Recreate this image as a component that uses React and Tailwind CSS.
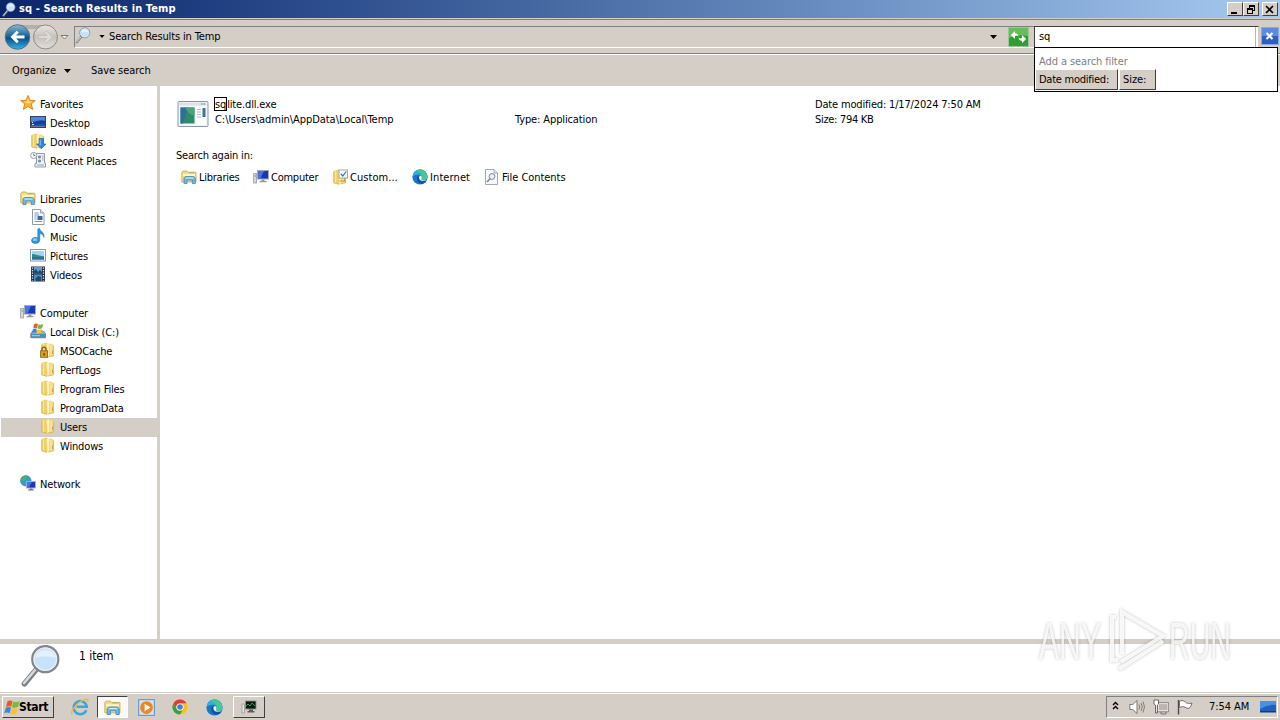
import React from "react";

const Svg = ({ size = 16, className = "", children }) => (
  <svg width={size} height={size} viewBox="0 0 16 16" className={`shrink-0 ${className}`}>
    {children}
  </svg>
);

const StarIcon = () => (
  <Svg>
    <path d="M8 .5l2 4.800 5.300.3-4.100 3.400 1.500 5.400L8 11.500l-4.700 2.900 1.500-5.400L.7 5.600 6 5.300z" fill="#fbb52c" stroke="#e07a14" strokeWidth=".9" />
    <path d="M8 3l1.200 3.400 3.300.3L8 8.500 3.700 6.700l3.100-.3z" fill="#fee79a" />
  </Svg>
);

const DesktopIcon = () => (
  <Svg>
    <rect x=".5" y="2.500" width="15" height="11" fill="#2050b8" stroke="#3a4458" />
    <path d="M1 3h14v4C10 5 6 8 1 8z" fill="#4c86de" />
    <path d="M1 9c5-1 9-3 14-2v3c-5-1-9 1-14 1z" fill="#173f9d" />
    <path d="M1 12h14v1H1z" fill="#6c7c96" />
    <path d="M2 10.500h2M2 8.500h1" stroke="#cfe2ff" />
  </Svg>
);

const FolderIcon = ({ children }) => (
  <Svg>
    <path d="M1.500 2l5-1.500L8 2v13l-1.500.5-5-1.500z" fill="#efcf68" />
    <path d="M8 2l3-.5L13.800 3v11L8 15z" fill="#f3d97f" />
    <path d="M6.500 2.500L9 1v13.500l-1.500 1z" fill="#fdf2bb" />
    <path d="M3.500 2v12" stroke="#f9e798" strokeWidth="1.400" />
    <path d="M11 3v10.500" stroke="#f9e798" strokeWidth="1.400" />
    <path d="M1.800 2.500v11.300l5 1.500M13.600 3.500v10.300L8 15" fill="none" stroke="#d5ad48" strokeWidth=".7" />
    <path d="M12.500 8.500v3.500" stroke="#c99d3a" strokeWidth=".9" />
    {children}
  </Svg>
);

const DownloadsIcon = () => (
  <FolderIcon>
    <path d="M9 5.500h4.500V11H16l-4.700 4.800L6.500 11H9z" fill="#2f86d6" stroke="#1b5ca8" strokeWidth=".6" />
    <path d="M10.200 6.500v6" stroke="#8cc8f5" />
  </FolderIcon>
);

const LockedFolderIcon = () => (
  <FolderIcon>
    <path d="M2 9V7.200a2 2 0 0 1 4 0V9" fill="none" stroke="#8b6508" strokeWidth="1.400" />
    <rect x=".6" y="8.800" width="7" height="6.500" fill="#d99e1b" stroke="#8a6108" strokeWidth=".8" />
    <rect x="3.500" y="11" width="1.200" height="2.500" fill="#4a3300" />
  </FolderIcon>
);

const RecentIcon = () => (
  <Svg>
    <path d="M5 1.500h9.500V11h1v4H5v-3.500h1.500V4H5z" fill="#eef2f6" stroke="#8794a2" strokeWidth=".9" />
    <path d="M8.500 4h2v2h-2zM8.500 8h2v2h-2zM12 4h1.500M12 6h1.500M12 8h1.500M7 13h7" fill="#6da0cf" stroke="#6c8298" strokeWidth=".7" />
    <circle cx="3.700" cy="3.500" r="3.100" fill="#f7f9fb" stroke="#8d98a5" strokeWidth=".9" />
    <path d="M3.700 1.500v2h1.600" fill="none" stroke="#576574" strokeWidth=".8" />
  </Svg>
);

const LibrariesIcon = ({ size }) => (
  <Svg size={size}>
    <path d="M.8 13V3.200L2 2h4l1.200 1.200H15V13z" fill="#f3dc83" stroke="#c7a548" strokeWidth=".8" />
    <path d="M2 5h12v2H2z" fill="#fdf5cb" />
    <path d="M8 3.800h5" stroke="#7fbf6a" strokeWidth=".8" />
    <path d="M3 14.600V9.200L4.500 7.500h8L14.300 9.200v5.400h-3V11H6v3.600z" fill="#70b8e0" stroke="#3e88ba" strokeWidth=".8" />
    <path d="M4.500 9h8" stroke="#c9ebfa" strokeWidth="1.200" />
  </Svg>
);

const DocumentsIcon = () => (
  <Svg>
    <path d="M2.500.5h8l3.500 3.500v11.500H2.500z" fill="#fff" stroke="#7e91a8" strokeWidth=".9" />
    <path d="M10.500.5V4H14" fill="#d7e3f0" stroke="#7e91a8" strokeWidth=".8" />
    <path d="M4.500 4h4M4.500 6h4.500M4.500 8h2M4.500 10h2M4.500 12.500h7.500" stroke="#5c86bd" strokeWidth=".9" />
    <rect x="7.500" y="7" width="5" height="4" fill="#3668a5" />
  </Svg>
);

const MusicIcon = () => (
  <Svg>
    <path d="M7.800 1L9.500.3c.4 3 5.200 3.600 4.500 9.200-.6-2.600-2-3.600-4.200-4v6.400c0 2.200-1.800 3.600-4.300 3.600S1.500 14.200 1.500 12.500s1.700-3.200 4.200-3.200c.8 0 1.500.2 2.100.5z" fill="#2e94dc" stroke="#1a6cb0" strokeWidth=".5" />
    <ellipse cx="5" cy="11.700" rx="2.300" ry="1.400" fill="#86cdf7" />
  </Svg>
);

const PicturesIcon = () => (
  <Svg>
    <rect x=".5" y="2.500" width="15" height="11.500" fill="#fff" stroke="#8698aa" />
    <rect x="2" y="4" width="12" height="8.500" fill="#9ed6f5" />
    <path d="M2 7c4 0 6 2 12 2v3.500H2z" fill="#3b8a80" />
    <path d="M2 10c4 0 7-.5 12 .5v2H2z" fill="#2470b5" />
  </Svg>
);

const VideosIcon = () => (
  <Svg>
    <rect x="1" y=".5" width="14" height="15" fill="#26303b" />
    <rect x="4" y="1" width="8" height="6.500" fill="#5b9fd0" />
    <rect x="4" y="8.500" width="8" height="6.500" fill="#4a90c8" />
    <path d="M4 5l2-2 2 3 2-2 2 2v1.500H4zM5 13l3-3 3 1v4H6z" fill="#1d4b77" />
    <path d="M2.500 1.500v13M13.500 1.500v13" stroke="#e8edf2" strokeWidth="1.300" strokeDasharray="1.300 1.200" />
  </Svg>
);

const ComputerIcon = () => (
  <Svg>
    <rect x="4.500" y="1.500" width="11" height="8.500" fill="#1a37b4" stroke="#a3acb8" />
    <path d="M5 2h6L7.500 9.500H5z" fill="#4a71e0" />
    <path d="M8.500 10.500h3v1.500h2v1.300H6.500V12h2z" fill="#8b97a5" />
    <rect x=".7" y="4.500" width="2.800" height="9.500" fill="#d6dbe0" stroke="#858e99" strokeWidth=".7" />
    <path d="M1.500 7h1.500" stroke="#3fa34d" />
  </Svg>
);

const WindowsFlag = ({ x = 0, y = 0, s = 1 }) => (
  <g transform={`translate(${x} ${y}) scale(${s})`}>
    <path d="M2.800 1.500Q5 0 7.800 1.300L6.500 7Q3.800 5.700 1.300 7.200z" fill="#ea5a24" />
    <path d="M8.500 1.600q2.700 1.600 6.500-.3L13.400 7Q10.200 8.900 7.200 7.400z" fill="#7cba3a" />
    <path d="M1.100 8Q3.800 6.600 6.300 7.900L5 13.500Q2.300 12.100-.5 13.600z" fill="#3b86d8" />
    <path d="M7 8.300q2.900 1.500 6.200-.2l-1.500 5.500q-3 1.800-6 .3z" fill="#fbc02a" />
  </g>
);

const DiskIcon = () => (
  <Svg>
    <path d="M.8 10.500L2.800 8h10.500l2.200 2.500v4.300H.8z" fill="#9fb2c0" stroke="#54758f" strokeWidth=".7" />
    <path d="M.8 10.800h14.700v4H.8z" fill="#4d8eb2" />
    <path d="M2 12.700h8" stroke="#a7dbef" strokeWidth=".9" />
    <WindowsFlag x={2.2} y={0} s={0.74} />
  </Svg>
);

const NetworkIcon = () => (
  <Svg>
    <circle cx="5.800" cy="5.800" r="5.300" fill="#2f9bd9" stroke="#1a6ba8" strokeWidth=".5" />
    <path d="M2 3c2-2 4-2.300 5-2l-1 3-3 2-2 0zM5 7l3 1-1 3H5.500zM8.500 2.500L10.700 5 9 6z" fill="#4cb848" />
    <rect x="6.500" y="6.500" width="9" height="6.500" fill="#1a37b4" stroke="#a8b3c2" strokeWidth=".9" />
    <path d="M7 7h5l-3 5.500H7z" fill="#4a71e0" />
    <path d="M9.500 13.500h3v1h1.500v1H8v-1h1.500z" fill="#6c7887" />
  </Svg>
);

const CustomIcon = () => (
  <FolderIcon>
    <rect x="7" y="1" width="8.500" height="8" fill="#fff" stroke="#8493a5" strokeWidth=".8" />
    <path d="M8.800 4.800l2 2.200 3.500-4.500" fill="none" stroke="#2b68c4" strokeWidth="1.200" />
    <path d="M7.500 12h6" stroke="#b98c2c" />
  </FolderIcon>
);

const EdgeIcon = ({ size = 16 }) => (
  <Svg size={size}>
    <circle cx="8" cy="8" r="7.600" fill="#1876cc" />
    <path d="M.5 8A7.500 7.500 0 0 1 15.500 7.500C15.500 10 14 11.200 12 11.200c-2.500 0-3-1-2.500-1.700.8-1 .5-4-2.500-4C4 5.500 1 6.500.5 8z" fill="#2fb0d8" />
    <path d="M8 .5a7.500 7.500 0 0 1 7.500 7c0 2.500-1.500 3.700-3.500 3.700-2.500 0-3-1-2.500-1.700C11 7 9.500 3 4 2z" fill="#56cf78" opacity=".7" />
    <path d="M5.200 8c-1 4 2 7.300 6 6.600 1.700-.5 2.700-1.600 3.400-2.800C10.500 13.500 7 12 7.200 8.800 7 7 5.500 7 5.200 8z" fill="#124f9c" />
    <path d="M9.300 9.800c.9-1 .5-2.700-.6-3.300-1.500.3-2 1.800-1.500 3.300.4 1.300 2.300 2.300 4.600 2 1.300-.1 2.200-.4 2.900-.9-2.100.9-5.600.4-5.400-1.100z" fill="#fff" />
  </Svg>
);

const FileContentsIcon = () => (
  <Svg>
    <path d="M1.500.5h8.500L13.500 4v11.500h-12z" fill="#fafbfc" stroke="#969ea8" strokeWidth=".9" />
    <path d="M10 .5V4h3.500" fill="#e4e8ec" stroke="#969ea8" strokeWidth=".8" />
    <circle cx="8" cy="7.500" r="2.900" fill="#edf3f8" stroke="#7d8792" strokeWidth="1" />
    <path d="M6 9.800L3 13" stroke="#7d8792" strokeWidth="1.500" />
  </Svg>
);

const Magnifier = ({ size, className, rim = "#81868c" }) => (
  <Svg size={size} className={className}>
    <path d="M1.600 14.500L6 9.200" stroke="#7d8185" strokeWidth="2" strokeLinecap="round" />
    <path d="M1.500 14.200L5.700 9.200" stroke="#d8dbde" strokeWidth=".9" strokeLinecap="round" />
    <circle cx="9.200" cy="5.500" r="4.700" fill="#c7e2fb" stroke={rim} strokeWidth=".9" />
    <circle cx="9.200" cy="5.500" r="4.100" fill="none" stroke="#e8edf2" strokeWidth=".5" />
    <path d="M5.600 5a3.700 3.700 0 0 1 7.200 0Q9.200 4.100 5.600 5z" fill="#e3f1fe" />
  </Svg>
);

const ExeIcon = () => (
  <svg width="32" height="32" viewBox="0 0 32 32">
    <rect x="1" y="3.500" width="30" height="25" rx="1" fill="#f4f6f8" stroke="#8d98a5" />
    <path d="M2 4.500h28v3H2z" fill="#dbe3eb" />
    <path d="M24 6h1.500M26.500 6H28" stroke="#62738a" strokeWidth="1.200" />
    <rect x="3.500" y="9.500" width="14" height="16" fill="#2d8a6a" />
    <path d="M3.500 9.500h8L6 25.500H3.500z" fill="#2e709b" />
    <path d="M8 9.500h9.500V18C13 17 10 14 8 9.500z" fill="#4fa276" />
    <rect x="19" y="9.500" width="10" height="17" fill="#fff" />
    <path d="M20 11.500h4M20 14h4M20 16.500h4M20 19h4" stroke="#a9b4c0" />
    <rect x="25.500" y="10" width="3" height="9" fill="#426da8" />
  </svg>
);

const Caret = ({ className = "" }) => (
  <svg width="7" height="4" viewBox="0 0 7 4" className={`shrink-0 ${className}`}>
    <path d="M0 0h7L3.500 4z" fill="#000" />
  </svg>
);

const TREE = [
  { label: "Favorites", icon: StarIcon, level: 0 },
  { label: "Desktop", icon: DesktopIcon, level: 1 },
  { label: "Downloads", icon: DownloadsIcon, level: 1 },
  { label: "Recent Places", icon: RecentIcon, level: 1 },
  null,
  { label: "Libraries", icon: LibrariesIcon, level: 0 },
  { label: "Documents", icon: DocumentsIcon, level: 1 },
  { label: "Music", icon: MusicIcon, level: 1 },
  { label: "Pictures", icon: PicturesIcon, level: 1 },
  { label: "Videos", icon: VideosIcon, level: 1 },
  null,
  { label: "Computer", icon: ComputerIcon, level: 0 },
  { label: "Local Disk (C:)", icon: DiskIcon, level: 1 },
  { label: "MSOCache", icon: LockedFolderIcon, level: 2 },
  { label: "PerfLogs", icon: FolderIcon, level: 2 },
  { label: "Program Files", icon: FolderIcon, level: 2 },
  { label: "ProgramData", icon: FolderIcon, level: 2 },
  { label: "Users", icon: FolderIcon, level: 2, selected: true },
  { label: "Windows", icon: FolderIcon, level: 2 },
  null,
  { label: "Network", icon: NetworkIcon, level: 0 },
];

const INDENT = ["pl-[19px]", "pl-[29px]", "pl-[39px]"];

const SEARCH_AGAIN = [
  { label: "Libraries", icon: LibrariesIcon, width: "w-[72px]", tracking: "tracking-[-0.25px]" },
  { label: "Computer", icon: ComputerIcon, width: "w-[79px]", tracking: "tracking-[-0.25px]" },
  { label: "Custom...", icon: CustomIcon, width: "w-[80px]", tracking: "tracking-[0.05px]" },
  { label: "Internet", icon: EdgeIcon, width: "w-[72px]", tracking: "tracking-[0.1px]" },
  { label: "File Contents", icon: FileContentsIcon, width: "w-[90px]", tracking: "tracking-[-0.05px]" },
];

const raised = "border border-t-white border-l-white border-r-[#404040] border-b-[#404040] bg-[#d4cec6]";

const TitleButton = ({ children, className = "" }) => (
  <button className={`flex h-[14px] w-4 items-center justify-center ${raised} ${className}`}>
    <svg width="12" height="11" viewBox="0 0 12 11" shapeRendering="crispEdges">{children}</svg>
  </button>
);

const TitleBar = () => (
  <div className="flex h-[18px] items-center bg-linear-to-r from-[#0a246a] to-[#a6caf0] pr-[2px] pl-[2px]">
    <Magnifier size={15} rim="#5f78a8" />
    <span className="ml-[2px] text-[11px] font-bold tracking-[0.11px] text-white">sq - Search Results in Temp</span>
    <div className="ml-auto flex">
      <TitleButton><path d="M2 8h6v2H2z" /></TitleButton>
      <TitleButton>
        <path d="M4 1h6v2H4zM4 3h1v1H4zM9 3h1v4H9zM8 6h1v1H8zM2 4h6v2H2zM2 6h1v4H2zM7 6h1v4H7zM2 9h6v1H2z" />
      </TitleButton>
      <TitleButton className="ml-[3px]">
        <path d="M2 2l7 7M9 2L2 9" stroke="#000" strokeWidth="1.600" shapeRendering="auto" />
      </TitleButton>
    </div>
  </div>
);

const NavBar = () => (
  <div className="mt-px flex h-[35px] items-center border-t border-b border-t-[#808080] border-b-[#808080] pl-[4px]">
    <svg width="66" height="28" viewBox="0 0 66 28" className="shrink-0">
      <defs>
        <linearGradient id="back" x1="0" y1="0" x2="0" y2="1">
          <stop offset="0" stopColor="#8fb6d0" />
          <stop offset=".45" stopColor="#1c689c" />
          <stop offset=".55" stopColor="#07508a" />
          <stop offset="1" stopColor="#33b6e8" />
        </linearGradient>
        <linearGradient id="fwd" x1="0" y1="0" x2="0" y2="1">
          <stop offset="0" stopColor="#e9e6e2" />
          <stop offset=".5" stopColor="#c6c1bb" />
          <stop offset="1" stopColor="#e2deda" />
        </linearGradient>
      </defs>
      <path d="M13 2h28l-6 4H19z" fill="#b3b0ac" />
      <circle cx="13.500" cy="14" r="12.300" fill="url(#back)" stroke="#56728a" />
      <path d="M6.500 14l6.300-6.200 2 2-2.700 2.700h8.400v3h-8.400l2.700 2.700-2 2z" fill="#fff" />
      <circle cx="41.500" cy="14" r="12" fill="url(#fwd)" stroke="#8e8a86" />
      <path d="M48.500 14l-6.300-6.200-2 2 2.700 2.700h-8.400v3h8.400l-2.700 2.700 2 2z" fill="#dedad6" stroke="#b7b2ac" strokeWidth=".6" />
      <path d="M57 12.500h7L60.500 16z" fill="#f5f3f0" stroke="#6f6b66" strokeWidth=".9" />
    </svg>
    <div className="ml-1 flex h-[22px] flex-1 items-center border-t border-b border-l border-t-[#808080] border-b-white border-l-[#808080]">
      <Magnifier size={17} className="-mt-[2px]" />
      <Caret className="ml-[7px] h-[3px] w-[6px]" />
      <span className="mt-px ml-[4px] tracking-[-0.13px]">Search Results in Temp</span>
      <Caret className="mr-[11px] ml-auto" />
      <svg width="21" height="20" viewBox="0 0 21 20" className="mr-[5px]">
        <rect x=".5" y=".5" width="20" height="19" fill="#2f9f2f" stroke="#9cc79a" />
        <path d="M1 1h19v8Q10 7 1 11z" fill="#66bd5c" />
        <path d="M7 4v2.200Q10 6 10.500 9.500L9 8.500 7 9v3L2.800 8zM14 16v-2.200Q11 14 10.500 10.500l1.500 1 2-.5V8l4.200 4z" fill="#fff" />
      </svg>
    </div>
    <div className="flex h-[22px] w-[225px] items-center border border-t-[#404040] border-r-[#d4cec6] border-b-white border-l-[#404040] bg-white pl-1">
      <span className="mt-[2px]">sq</span>
      <div className="mr-[2px] ml-auto h-full w-px bg-[#b8b4ae]" />
    </div>
    <svg width="19" height="19" viewBox="0 0 19 19" className="ml-[2px]">
      <rect x=".5" y=".5" width="17" height="17" fill="#2b5fc4" stroke="#8ca9dc" />
      <path d="M1 1h16v8H1z" fill="#5a8be0" />
      <path d="M5.500 6l6 6M11.500 6l-6 6" stroke="#fff" strokeWidth="2" />
    </svg>
  </div>
);

const FilterPopup = () => (
  <div className="absolute top-[47px] left-[1034px] h-[45px] w-[244px] border border-black bg-white">
    <div className="pt-[6px] pl-1 leading-[15px] tracking-[-0.1px] text-[#808080]">Add a search filter</div>
    <div className="flex">
      <button className={`flex h-[21px] w-[83px] items-center pt-[2px] pl-[3px] tracking-[-0.25px] ${raised}`}>Date modified:</button>
      <button className={`ml-px flex h-[21px] w-[37px] items-center pt-[2px] pl-[3px] ${raised}`}>Size:</button>
    </div>
  </div>
);

const Sidebar = () => (
  <nav className="w-[160px] shrink-0 border-r-[3px] border-[#d4cec6] pt-[9px] pl-px tracking-[-0.15px]">
    {TREE.map((node, i) => {
      if (!node) return <div key={i} className="h-[19px]" />;
      const Icon = node.icon;
      return (
        <div key={i} className={`flex h-[19px] items-center ${INDENT[node.level]} ${node.selected ? "bg-[#d4cec6]" : ""}`}>
          <span className="-mt-[3px]"><Icon /></span>
          <span className="mt-[2px] ml-1 whitespace-nowrap">{node.label}</span>
        </div>
      );
    })}
  </nav>
);

const Results = () => (
  <main className="flex-1 pt-[11px] pl-[16px]">
    <div className="flex h-8 leading-[15px]">
      <div className="mt-px ml-px h-8 w-8"><ExeIcon /></div>
      <div className="ml-[6px] w-[300px]">
        <div className="tracking-[-0.15px]"><span className="-ml-px inline-block h-[14px] border border-black leading-[13px]">sq</span>lite.dll.exe</div>
        <div className="tracking-[-0.06px]">C:\Users\admin\AppData\Local\Temp</div>
      </div>
      <div className="w-[300px] pt-[15px] tracking-[-0.12px]">Type: Application</div>
      <div className="tracking-[-0.17px]">
        <div>Date modified: 1/17/2024 7:50 AM</div>
        <div className="tracking-[-0.3px]">Size: 794 KB</div>
      </div>
    </div>
    <div className="mt-[20px] leading-[14px] tracking-[-0.2px]">Search again in:</div>
    <div className="mt-[6px] flex pl-[5px]">
      {SEARCH_AGAIN.map(({ label, icon: Icon, width, tracking }) => (
        <div key={label} className={`flex h-4 items-center gap-[2px] whitespace-nowrap ${width}`}>
          <Icon />
          <span className={`mt-[2px] ${tracking}`}>{label}</span>
        </div>
      ))}
    </div>
  </main>
);

const IeIcon = () => (
  <Svg size={18}>
    <path d="M13.600 10.800A5.800 5.800 0 1 1 14 7.800H5" fill="none" stroke="#3aa6e2" strokeWidth="2.300" />
    <path d="M1 14.500C-1 12 6 3.500 12 1.500c3-1 3.500 0 2.700 2" fill="none" stroke="#edb934" strokeWidth="1.200" />
  </Svg>
);

const PlayerIcon = () => (
  <Svg size={17}>
    <rect x=".6" y=".6" width="14.800" height="14.800" fill="#cfe3f4" stroke="#5b98cf" />
    <circle cx="8" cy="8" r="6" fill="#f08519" />
    <path d="M6.200 4.500v7L11.800 8z" fill="#fff" />
  </Svg>
);

const ChromeIcon = () => (
  <Svg>
    <circle cx="8" cy="8" r="7.500" fill="#fbc116" />
    <path d="M1.500 4.250A7.500 7.500 0 0 1 14.500 4.250H8A3.750 3.750 0 0 0 4.750 9.900z" fill="#e33b2e" />
    <path d="M1.500 4.250A7.500 7.500 0 0 0 8 15.500l3.250-5.600a3.750 3.750 0 0 1-6.500 0z" fill="#2fa24f" />
    <circle cx="8" cy="8" r="3.600" fill="#fff" />
    <circle cx="8" cy="8" r="2.800" fill="#3b7ded" />
  </Svg>
);

const MonitorIcon = () => (
  <Svg>
    <rect x="4.500" y="2" width="10.500" height="8" fill="#07190c" stroke="#8b8f92" strokeWidth=".9" />
    <path d="M5 7l2-2 2 2 2-3 3 3" fill="none" stroke="#2fb455" strokeWidth=".9" />
    <path d="M8 10.500h4v1.500h1.500v1.500H6.500V12H8z" fill="#5a5e60" />
    <rect x="1" y="5" width="2.300" height="9" fill="#e4e4e2" stroke="#808486" strokeWidth=".6" />
  </Svg>
);

const Taskbar = () => (
  <footer className="flex h-[27px] items-center border-t border-white pl-[2px]">
    <button className={`flex h-[22px] w-[52px] items-center pl-px ${raised}`}>
      <Svg><WindowsFlag x={0.7} y={0.8} /></Svg>
      <span className="-ml-px text-[12px] font-bold tracking-[-0.3px]">Start</span>
    </button>
    <div className="ml-[9px] flex items-center">
      <div className="flex w-[34px] justify-center"><IeIcon /></div>
      <div className="flex h-[22px] w-[31px] items-center justify-center border border-t-[#404040] border-r-white border-b-white border-l-[#404040] bg-[#fbfaf8]">
        <LibrariesIcon size={17} />
      </div>
      <div className="ml-px flex w-[34px] justify-center"><PlayerIcon /></div>
      <div className="flex w-[34px] justify-center"><ChromeIcon /></div>
      <div className="flex w-[34px] justify-center"><EdgeIcon size={17} /></div>
      <div className={`ml-[2px] flex h-[22px] w-[32px] items-center justify-center ${raised}`}><MonitorIcon /></div>
    </div>
    <div className="mr-[2px] ml-auto flex h-[22px] w-[172px] items-center border border-t-[#808080] border-r-white border-b-white border-l-[#808080] pl-[5px]">
      <svg width="7" height="9" viewBox="0 0 7 9" className="-mt-[3px]">
        <path d="M1 4l2.500-2.500L6 4M1 8l2.500-2.500L6 8" fill="none" stroke="#000" strokeWidth="1.400" />
      </svg>
      <Svg className="ml-[10px]">
        <path d="M.8 5.500h3L8 1.500v13l-4.200-4h-3z" fill="#fff" stroke="#6e6c69" strokeWidth=".9" />
        <path d="M10 5.500q1.500 2.500 0 5M12 4q2.700 4 0 8M14 2.500q3 5.500 0 11" fill="none" stroke="#77736f" strokeWidth=".9" />
      </Svg>
      <Svg className="ml-2">
        <rect x="5" y="4.500" width="10.200" height="7.500" fill="#b9b5af" stroke="#fff" strokeWidth="1.200" />
        <path d="M4.300 3.800h11.400v9H4.300zM8 13v2h5v-2" fill="none" stroke="#55524e" strokeWidth=".7" />
        <path d="M1 1h4.500v4L4.300 6.200V14H2.500V6.200L1 5z" fill="#fff" stroke="#4c4946" strokeWidth=".8" />
      </Svg>
      <Svg className="ml-2">
        <path d="M1.500 1v14.500" stroke="#4f4c48" strokeWidth="1.400" />
        <path d="M2.500 2q3-1 4.500 0t2.500 2q3 .8 5.500.2-.8 4-3 5-2 .5-4-1T2.500 8.500z" fill="#fff" stroke="#67635f" strokeWidth=".9" />
      </Svg>
      <span className="mt-px ml-[16px] whitespace-nowrap tracking-[-0.05px]">7:54 AM</span>
      <Svg className="ml-auto mr-px">
        <rect y="2" width="16" height="11" fill="#2260bd" />
        <path d="M0 2h16v4Q8 5 0 10z" fill="#4a90e4" />
        <path d="M0 12h16v1.500H0z" fill="#163c78" />
      </Svg>
    </div>
  </footer>
);

const Watermark = () => (
  <svg
    width="210"
    height="80"
    viewBox="0 0 210 80"
    className="absolute top-[600px] left-[1030px] overflow-visible [filter:drop-shadow(0_0_1.500px_rgba(0,0,0,0.3))]"
  >
    <g fill="#fff" fillOpacity=".8" fontFamily="Liberation Sans Narrow, Liberation Sans, sans-serif" fontSize="51">
      <text x="9" y="59" textLength="62" lengthAdjust="spacingAndGlyphs">ANY</text>
      <text x="139" y="59" textLength="62" lengthAdjust="spacingAndGlyphs">RUN</text>
    </g>
    <g fill="none" stroke="#fff" strokeOpacity=".85" strokeWidth="4">
      <path d="M92 54V12l41 24-42 26" />
      <path d="M86 17h-4v43h6M89 69l44-28" />
    </g>
  </svg>
);

const App = () => {
  return (
    <div className="relative flex h-[720px] w-[1280px] flex-col overflow-hidden bg-[#d4cec6] font-['DejaVu_Sans_Condensed','DejaVu_Sans',sans-serif] text-[11px] tracking-[-0.05px] text-black">
      <TitleBar />
      <NavBar />
      <div className="flex h-[32px] items-center border-t border-white pl-3">
        <span className="mt-px">Organize</span>
        <Caret className="ml-2" />
        <span className="mt-px ml-5">Save search</span>
      </div>
      <div className="flex h-[553px] bg-white">
        <Sidebar />
        <Results />
      </div>
      <div className="mt-[5px] flex h-[48px] bg-white">
        <Magnifier size={44} className="ml-[20px]" />
        <span className="mt-[3px] ml-[15px] text-[12px] leading-[18px]">1 item</span>
      </div>
      <div className="h-px" />
      <Taskbar />
      <FilterPopup />
      <Watermark />
    </div>
  );
};

export default App;
